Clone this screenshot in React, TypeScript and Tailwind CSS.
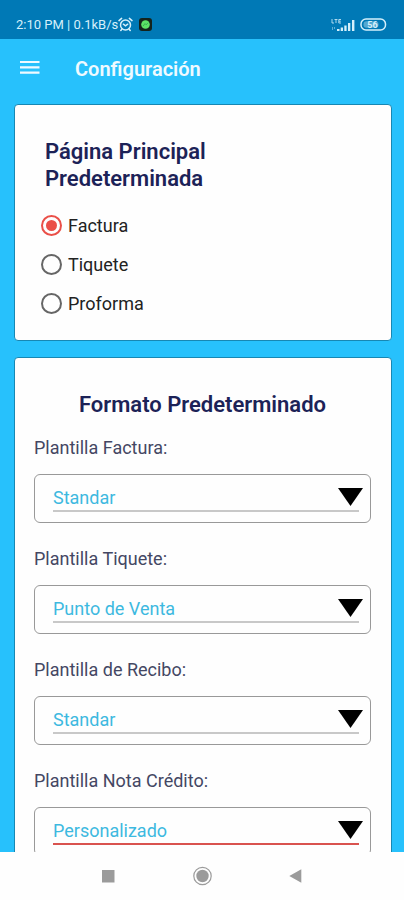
import React, { useState } from "react";

const pages = ["Factura", "Tiquete", "Proforma"];

const formats = ["Standar", "Punto de Venta", "Personalizado"];

const templates = [
    { id: "factura", label: "Plantilla Factura:", value: "Standar" },
    { id: "tiquete", label: "Plantilla Tiquete:", value: "Punto de Venta" },
    { id: "recibo", label: "Plantilla de Recibo:", value: "Standar" },
    { id: "nota-credito", label: "Plantilla Nota Crédito:", value: "Personalizado", active: true },
];

function StatusBar() {
    return (
        <div className="flex h-[39px] shrink-0 items-center justify-between bg-[#0079b6] pt-[10px] pr-[17px] pl-4 text-[#d5f0fb]">
            <div className="flex items-center text-[13px] leading-4">
                <span>2:10 PM | 0.1kB/s</span>
                <svg className="h-[15px] w-[15px]" viewBox="0 0 15 15" fill="none" stroke="currentColor" strokeWidth="1.5" strokeLinecap="round">
                    <circle cx="7.5" cy="8" r="5" />
                    <path d="M1 3.6 3.6 1.4M14 3.6l-2.6-2.2M5.4 7.2l2.1 1.6 2.2-1.6M3.8 12.2l-1 1.3M11.2 12.2l1 1.3" />
                </svg>
                <svg className="ml-[6px] h-[13px] w-[13px]" viewBox="0 0 13 13">
                    <rect width="13" height="13" rx="3" fill="#14231c" />
                    <circle cx="6.5" cy="6.5" r="4.3" fill="#5ce267" />
                    <path d="M4 8.2 6 5.6l1.2 1.2L9 4.8" fill="none" stroke="#2b9a49" strokeWidth="0.7" />
                </svg>
            </div>
            <div className="flex items-center gap-1">
                <svg className="h-[14px] w-[26px]" viewBox="0 0 26 14" fill="currentColor">
                    <path d="M2 1v4h2M4.5 1.5h3M6 1.5V5M11 1.5H8.8V5H11M9 3.2h1.8" fill="none" stroke="currentColor" strokeWidth="0.8" />
                    <path d="M2 9h1v3H2zM4 9h1v2H4z" opacity="0.45" />
                    <path d="M7 11h2.5v2H7zM10.7 9.5h2.3V13h-2.3zM14.3 7.5h2.3V13h-2.3zM18 5h2.3v8H18zM22 2h2.4v11H22z" />
                </svg>
                <svg className="h-[13px] w-[27px]" viewBox="0 0 27 13">
                    <rect x="1" y="1" width="24.5" height="11" rx="5" fill="none" stroke="currentColor" strokeWidth="1.5" />
                    <rect x="3.5" y="3.2" width="15" height="6.6" rx="3" fill="currentColor" opacity="0.4" />
                    <text x="12.5" y="9.6" textAnchor="middle" fontSize="9" fontWeight="700" fill="currentColor">56</text>
                </svg>
            </div>
        </div>
    );
}

function TemplateSelect({ id, label, value, active }: { id: string; label: string; value: string; active?: boolean }) {
    return (
        <div className="mb-6">
            <label htmlFor={id} className="block text-lg leading-6 text-[#444763]">{label}</label>
            <div className="relative mt-[14px] rounded-md border border-[#999999] py-[10px] pr-[11px] pl-[18px]">
                <select
                    id={id}
                    defaultValue={value}
                    className={`block h-[27px] w-full appearance-none border-b-2 bg-transparent text-lg leading-6 text-[#3db9e0] outline-none ${active ? "border-[#d9534f]" : "border-[#c8c8c8]"}`}
                >
                    {formats.map((f) => (
                        <option key={f}>{f}</option>
                    ))}
                </select>
                <svg className="pointer-events-none absolute top-[13px] right-[7px] h-[18px] w-[25px]" viewBox="0 0 25 18">
                    <path d="M0 0h25L12.5 18z" fill="#000" />
                </svg>
            </div>
        </div>
    );
}

function NavigationBar() {
    return (
        <nav className="flex h-12 shrink-0 items-center justify-center gap-[68px] bg-[#fefefe] text-[#9b9b9b]">
            <button type="button" aria-label="Recientes">
                <svg className="h-[26px] w-[26px]" viewBox="0 0 26 26">
                    <rect x="7" y="7" width="12.5" height="12.5" fill="currentColor" />
                </svg>
            </button>
            <button type="button" aria-label="Inicio">
                <svg className="h-[26px] w-[26px]" viewBox="0 0 26 26">
                    <circle cx="13.5" cy="13" r="8.7" fill="none" stroke="currentColor" strokeWidth="1.2" />
                    <circle cx="13.5" cy="13" r="6.2" fill="currentColor" />
                </svg>
            </button>
            <button type="button" aria-label="Atrás">
                <svg className="h-[26px] w-[26px]" viewBox="0 0 26 26">
                    <path d="M18.3 6.3v13.4L6.3 13z" fill="currentColor" />
                </svg>
            </button>
        </nav>
    );
}

export default function App() {
    const [page, setPage] = useState("Factura");

    return (
        <div className="flex h-screen flex-col bg-[#27c1fc] font-[Roboto,sans-serif]">
            <StatusBar />
            <header className="flex h-[60px] shrink-0 items-center gap-[35px] px-5 text-[#effaff]">
                <button type="button" aria-label="Menú">
                    <svg className="h-5 w-5" viewBox="0 0 20 20">
                        <path d="M0 3h19.5M0 8.3h19.5M0 13.6h19.5" stroke="currentColor" strokeWidth="2.2" />
                    </svg>
                </button>
                <h1 className="text-xl font-semibold">Configuración</h1>
            </header>

            <main className="min-h-0 flex-1 overflow-y-auto pt-[5px] pr-3 pl-[14px] [scrollbar-width:none]">
                <section className="rounded-sm border border-[#1787b3] bg-[#fefefe] px-[26px] pt-[33px] pb-[17px]">
                    <h2 className="max-w-[240px] pl-1 text-[22px] leading-[27px] font-semibold text-[#1c2257]">
                        Página Principal Predeterminada
                    </h2>
                    <div className="mt-[14px]">
                        {pages.map((p) => (
                            <label key={p} className="flex h-[39px] items-center gap-[6px] text-lg text-[#222222]">
                                <input
                                    type="radio"
                                    name="pagina"
                                    checked={page === p}
                                    onChange={() => setPage(p)}
                                    className="grid h-[21px] w-[21px] appearance-none place-content-center rounded-full border-2 border-[#666666] before:h-[11px] before:w-[11px] before:rounded-full checked:border-[#ea4f48] checked:before:bg-[#ea4f48]"
                                />
                                {p}
                            </label>
                        ))}
                    </div>
                </section>

                <section className="mt-4 rounded-sm border border-[#1787b3] bg-[#fefefe] pt-[33px] pr-5 pb-4 pl-[19px]">
                    <h2 className="mb-[18px] text-center text-[22px] leading-[27px] font-semibold text-[#1c2257]">Formato Predeterminado</h2>
                    {templates.map((t) => (
                        <TemplateSelect key={t.id} {...t} />
                    ))}
                </section>
            </main>

            <NavigationBar />
        </div>
    );
}
